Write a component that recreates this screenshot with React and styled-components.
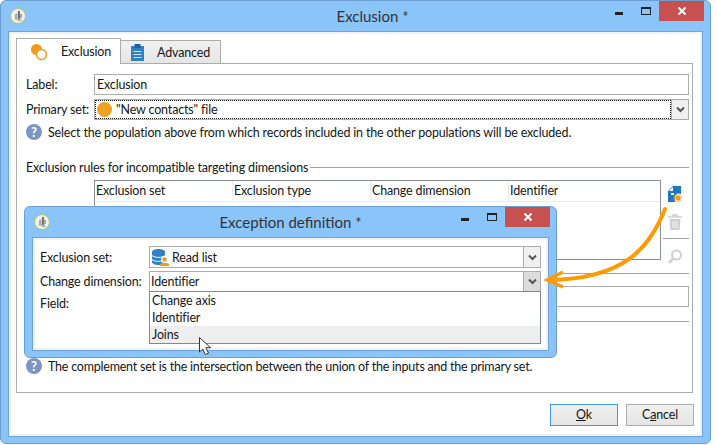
import React from "react";
import styled, { createGlobalStyle } from "styled-components";

const GlobalStyle = createGlobalStyle`
  html, body {
    margin: 0;
    padding: 0;
    background: #fff;
  }
  body {
    font-family: Lato, "Noto Sans", sans-serif;
    font-size: 12.5px;
    letter-spacing: -0.16px;
    color: #161616;
  }
`;

function AppIcon() {
  return (
    <svg width="16" height="16" viewBox="0 0 16 16">
      <circle cx="8" cy="8" r="7.500" fill="#f0f1ec" stroke="#a6c96a" />
      <path d="M5 11.500V6.500l2.500-1.500v6.500z" fill="#a8a8a8" />
      <path d="M9 3v8" stroke="#555" strokeWidth="1.600" />
      <path d="M11 6v4M7.500 12h4" stroke="#777" strokeWidth="1.200" />
    </svg>
  );
}

function ExclusionIcon() {
  return (
    <svg width="18" height="18" viewBox="0 0 18 18">
      <circle cx="6.500" cy="6.500" r="5.500" fill="#f09a1c" />
      <circle cx="11.500" cy="11.500" r="5" fill="#fff" stroke="#f09a1c" strokeWidth="1.400" />
    </svg>
  );
}

function ClipboardIcon() {
  return (
    <svg width="13" height="17" viewBox="0 0 13 17">
      <rect x="0" y="2" width="13" height="15" fill="#2f80c4" />
      <rect x="3.500" y="0" width="6" height="4" fill="#1d5f99" />
      <path d="M2.500 7.500h8M2.500 10.500h8M2.500 13.500h8" stroke="#cfe5f7" strokeWidth="1.200" />
    </svg>
  );
}

function DatabaseIcon() {
  return (
    <svg width="17" height="17" viewBox="0 0 17 17">
      <path d="M0 3c0-4 13-4 13 0v10c0 4-13 4-13 0z" fill="#2f80c4" />
      <path d="M0 6.500c2 2.500 11 2.500 13 0M0 10.500c2 2.500 11 2.500 13 0" stroke="#fff" strokeWidth="1" fill="none" />
      <circle cx="12.500" cy="10.500" r="3.500" fill="#fff" />
      <circle cx="12.500" cy="10.500" r="2.300" fill="#f09a1c" />
      <path d="M8 17v-2c1-1.500 8-1.500 9 0v2z" fill="#f09a1c" />
    </svg>
  );
}

function AddFileIcon() {
  return (
    <svg width="14" height="16" viewBox="0 0 14 16">
      <path d="M5 0h8v8a4.500 4.500 0 0 0-6 6v2H0V5z" fill="#1f78c4" />
      <path d="M5 1v4H1z" fill="#fff" />
      <path d="M3 7h3v2H3z" fill="#fff" />
      <circle cx="10" cy="12" r="2.800" fill="#f59a14" />
      <circle cx="10" cy="12" r="4" fill="none" stroke="#f59a14" strokeWidth="1" strokeDasharray="1.200 1" />
    </svg>
  );
}

function TrashIcon() {
  return (
    <svg width="14" height="16" viewBox="0 0 14 16">
      <path d="M0 3h14M5 3V1h4v2" stroke="#cfcfcf" strokeWidth="1.600" fill="none" />
      <path d="M1.500 5h11l-1 11h-9z" fill="#cfcfcf" />
      <path d="M5 7v7M7 7v7M9 7v7" stroke="#f4f4f4" strokeWidth="1" />
    </svg>
  );
}

function SearchIcon() {
  return (
    <svg width="14" height="16" viewBox="0 0 14 16">
      <circle cx="8.500" cy="6" r="4.500" fill="none" stroke="#cfcfcf" strokeWidth="2" />
      <path d="M5 9.500L1 14" stroke="#cfcfcf" strokeWidth="2.600" />
    </svg>
  );
}

function CloseGlyph() {
  return (
    <svg width="10" height="10" viewBox="0 0 10 10">
      <path d="M1.500 1.500l7 7M8.500 1.500l-7 7" stroke="#fff" strokeWidth="2" />
    </svg>
  );
}

function Chevron() {
  return (
    <svg width="9" height="7" viewBox="0 0 9 7">
      <path d="M1 1.500l3.500 3.500L8 1.500" stroke="#555" strokeWidth="2" fill="none" />
    </svg>
  );
}

function Titlebar({ title, shift }) {
  return (
    <TitleBar $shift={shift}>
      <TitleIcon>
        <AppIcon />
      </TitleIcon>
      <TitleText>{title}</TitleText>
      <Controls>
        <MinButton>
          <MinGlyph />
        </MinButton>
        <MaxButton>
          <MaxGlyph />
        </MaxButton>
        <CloseButton>
          <CloseGlyph />
        </CloseButton>
      </Controls>
    </TitleBar>
  );
}

function Combo({ children, active, focused, $gap }) {
  return (
    <ComboBox>
      <ComboValue $focused={focused} $gap={$gap}>
        {children}
      </ComboValue>
      <ComboArrow $active={active}>
        <Chevron />
      </ComboArrow>
    </ComboBox>
  );
}

function Hint({ children, ...rest }) {
  return (
    <HintRow {...rest}>
      <HelpDot>?</HelpDot>
      <span>{children}</span>
    </HintRow>
  );
}

export default function App() {
  return (
    <Page>
      <GlobalStyle />
      <Window $width={711} $height={444}>
        <Titlebar title="Exclusion *" shift={34} />
        <Client>
          <TabArea>
            <TabBar>
              <Tab $active>
                <ExclusionIcon />
                <TabLabel>Exclusion</TabLabel>
              </Tab>
              <Tab>
                <ClipboardIcon />
                <TabLabel>Advanced</TabLabel>
              </Tab>
            </TabBar>
            <TabPane>
              <FormRow>
                <span>Label:</span>
                <TextInput>Exclusion</TextInput>
              </FormRow>
              <FormRow>
                <span>Primary set:</span>
                <Combo focused>
                  <OrangeDot />
                  "New contacts" file
                </Combo>
              </FormRow>
              <Hint>
                Select the population above from which records included in the other
                populations will be excluded.
              </Hint>
              <GroupHeader>Exclusion rules for incompatible targeting dimensions</GroupHeader>
              <TableRow>
                <Table>
                  <TableHead>
                    <HeadCell>Exclusion set</HeadCell>
                    <HeadCell>Exclusion type</HeadCell>
                    <HeadCell>Change dimension</HeadCell>
                    <HeadCell>Identifier</HeadCell>
                  </TableHead>
                </Table>
                <Toolbar>
                  <ToolButton>
                    <AddFileIcon />
                  </ToolButton>
                  <ToolButton $gap={12}>
                    <TrashIcon />
                  </ToolButton>
                  <ToolDivider />
                  <ToolButton>
                    <SearchIcon />
                  </ToolButton>
                </Toolbar>
              </TableRow>
              <Rule $top={13} />
              <FormRow $top={12}>
                <span />
                <TextInput />
              </FormRow>
              <Rule $top={14} />
              <Hint $top={36} $spacing={-0.22}>
                The complement set is the intersection between the union of the inputs and
                the primary set.
              </Hint>
            </TabPane>
          </TabArea>
          <Footer>
            <PushButton $primary>
              <u>O</u>k
            </PushButton>
            <PushButton>
              C<u>a</u>ncel
            </PushButton>
          </Footer>
        </Client>
      </Window>

      <Dialog>
        <Window $width={533} $height={152}>
          <Titlebar title="Exception definition *" />
          <DialogClient>
            <DialogRow $height={22}>
              <span>Exclusion set:</span>
              <Combo $gap={3}>
                <IconSlot>
                  <DatabaseIcon />
                </IconSlot>
                Read list
              </Combo>
            </DialogRow>
            <DialogRow $height={21} $top={3}>
              <span>Change dimension:</span>
              <DropAnchor>
                <Combo active>Identifier</Combo>
                <DropList>
                  <DropItem>Change axis</DropItem>
                  <DropItem>Identifier</DropItem>
                  <DropItem $hover>Joins</DropItem>
                </DropList>
              </DropAnchor>
            </DialogRow>
            <DialogRow $height={21} $top={1}>
              <span>Field:</span>
            </DialogRow>
            <DialogFooter>
              <PushButton $primary />
              <PushButton />
            </DialogFooter>
          </DialogClient>
        </Window>
      </Dialog>

      <Overlay width="718" height="445" viewBox="0 0 718 445">
        <path
          d="M665 209C650 247 625 279 549 280"
          fill="none"
          stroke="#ff9a00"
          strokeWidth="4"
          strokeLinecap="round"
        />
        <path d="M563 272L547 280L563 287" fill="none" stroke="#ff9a00" strokeWidth="3.200" />
        <path
          d="M199.500 337.500v14.500l3.200-3 2.600 5.500 3.200-1.400-2.600-5.400h4.600z"
          fill="#fff"
          stroke="#333"
          strokeWidth="1"
        />
      </Overlay>
    </Page>
  );
}

const Page = styled.div`
  position: relative;
  width: 718px;
  height: 445px;
  overflow: hidden;
  white-space: nowrap;
`;

const Window = styled.div`
  box-sizing: border-box;
  width: ${(p) => p.$width}px;
  height: ${(p) => p.$height}px;
  display: flex;
  flex-direction: column;
  background: #8ac4f9;
  border: 1px solid #6b9fd0;
  border-radius: 6px;
  padding: 0 7px 6px;
`;

const TitleBar = styled.div`
  flex: none;
  height: 30px;
  margin: 0 -7px;
  padding-left: ${(p) => p.$shift || 0}px;
  display: grid;
  grid-template-columns: 1fr auto 1fr;
  align-items: start;
  box-sizing: border-box;
  position: relative;
`;

const TitleIcon = styled.div`
  position: absolute;
  left: 9px;
  top: 7px;
  width: 16px;
  height: 16px;
`;

const TitleText = styled.div`
  grid-column: 2;
  font-size: 15px;
  letter-spacing: 0;
  line-height: 30px;
  color: #333;
`;

const Controls = styled.div`
  grid-column: 3;
  justify-self: end;
  margin-right: 6px;
  display: flex;
  height: 20px;
`;

const MinButton = styled.div`
  width: 27px;
  display: flex;
  justify-content: center;
  align-items: flex-end;
  padding-bottom: 6px;
  box-sizing: border-box;
`;

const MinGlyph = styled.div`
  width: 8px;
  height: 3px;
  background: #222;
`;

const MaxButton = styled.div`
  width: 27px;
  display: flex;
  justify-content: center;
  align-items: center;
`;

const MaxGlyph = styled.div`
  box-sizing: border-box;
  width: 10px;
  height: 8px;
  border: 1px solid #222;
  border-top-width: 2px;
`;

const CloseButton = styled.div`
  width: 45px;
  background: #c75050;
  display: flex;
  justify-content: center;
  align-items: center;
`;

const Client = styled.div`
  flex: 1;
  min-height: 0;
  display: flex;
  flex-direction: column;
  background: #fff;
  border: 1px solid #6ba3da;
  box-shadow: inset 0 0 0 2px #f2f2f2;
`;

const TabArea = styled.div`
  margin: 7px 9px 0 7px;
`;

const TabBar = styled.div`
  height: 25px;
  display: flex;
  align-items: flex-end;
  position: relative;
  z-index: 1;
  margin-bottom: -1px;
`;

const Tab = styled.div`
  box-sizing: border-box;
  height: ${(p) => (p.$active ? 26 : 24)}px;
  width: ${(p) => (p.$active ? 105 : 101)}px;
  margin-left: ${(p) => (p.$active ? 0 : -1)}px;
  padding-left: ${(p) => (p.$active ? 13 : 10)}px;
  display: flex;
  align-items: center;
  background: ${(p) => (p.$active ? "#fff" : "linear-gradient(#f0f0f0, #e5e5e5)")};
  border: 1px solid #acacac;
  border-bottom: ${(p) => (p.$active ? "none" : "1px solid #acacac")};
`;

const TabLabel = styled.span`
  margin-left: 13px;
`;

const TabPane = styled.div`
  box-sizing: border-box;
  height: 330px;
  border: 1px solid #acacac;
  padding: 10px 3px 0 9px;
`;

const FormRow = styled.div`
  display: grid;
  grid-template-columns: 68px 1fr;
  align-items: center;
  height: 21px;
  margin-top: ${(p) => p.$top ?? 4}px;
  &:first-child {
    margin-top: 0;
  }
`;

const TextInput = styled.div`
  box-sizing: border-box;
  height: 21px;
  line-height: 19px;
  padding-left: 2px;
  border: 1px solid #acacac;
  background: #fff;
`;

const ComboBox = styled.div`
  box-sizing: border-box;
  height: 100%;
  display: flex;
  border: 1px solid #acacac;
  background: #fff;
`;

const ComboValue = styled.div`
  flex: 1;
  min-width: 0;
  display: flex;
  align-items: center;
  gap: ${(p) => p.$gap ?? 4}px;
  padding-left: 1px;
  outline: ${(p) => (p.$focused ? "1px dotted #222" : "none")};
  outline-offset: -1px;
`;

const IconSlot = styled.span`
  display: flex;
  margin-left: 1px;
`;

const ComboArrow = styled.div`
  flex: none;
  width: 16px;
  display: flex;
  justify-content: center;
  align-items: center;
  background: ${(p) => (p.$active ? "#dcdcdc" : "#f0f0f0")};
  border-left: 1px solid #acacac;
`;

const OrangeDot = styled.span`
  width: 15px;
  height: 15px;
  margin-left: 1px;
  border-radius: 50%;
  background: #f0a020;
`;

const HintRow = styled.div`
  display: flex;
  align-items: center;
  gap: 6px;
  height: 16px;
  margin-top: ${(p) => p.$top ?? 4}px;
  letter-spacing: ${(p) => p.$spacing ?? -0.16}px;
`;

const HelpDot = styled.span`
  width: 16px;
  height: 16px;
  border-radius: 50%;
  background: #7b96c6;
  color: #fff;
  font-size: 13px;
  font-weight: 700;
  line-height: 16px;
  text-align: center;
`;

const GroupHeader = styled.div`
  display: flex;
  align-items: center;
  gap: 2px;
  height: 16px;
  margin-top: 19px;
  &::after {
    content: "";
    flex: 1;
    height: 1px;
    background: #a0a0a0;
  }
`;

const TableRow = styled.div`
  display: flex;
  margin: 5px 0 0 68px;
  height: 80px;
`;

const Table = styled.div`
  box-sizing: border-box;
  width: 567px;
  height: 100%;
  border: 1px solid #8a8f96;
  background: #fff;
`;

const TableHead = styled.div`
  display: grid;
  grid-template-columns: repeat(4, 138px);
  height: 20px;
  border-bottom: 1px solid #e3eefa;
`;

const HeadCell = styled.div`
  padding-left: 1px;
  line-height: 20px;
  border-right: 1px solid #e3eefa;
  &:last-child {
    border-right: none;
  }
`;

const Toolbar = styled.div`
  width: 26px;
  margin-left: 2px;
  padding-top: 6px;
`;

const ToolButton = styled.div`
  height: 16px;
  padding-left: 5px;
  margin-top: ${(p) => p.$gap || 0}px;
`;

const ToolDivider = styled.div`
  height: 1px;
  background: #a0a0a0;
  margin: 8px 0 10px;
`;

const Rule = styled.div`
  height: 1px;
  background: #a0a0a0;
  margin-top: ${(p) => p.$top}px;
`;

const Footer = styled.div`
  display: flex;
  justify-content: flex-end;
  gap: 8px;
  padding: 11px 8px 0 0;
`;

const PushButton = styled.div`
  box-sizing: border-box;
  width: 68px;
  height: 22px;
  line-height: 20px;
  text-align: center;
  background: linear-gradient(#f0f0f0, #e5e5e5);
  border: 1px solid ${(p) => (p.$primary ? "#3c9bf0" : "#acacac")};
`;

const Dialog = styled.div`
  position: absolute;
  left: 24px;
  top: 206px;
`;

const DialogClient = styled(Client)`
  padding: 8px 7px 6px 7px;
`;

const DialogRow = styled.div`
  display: grid;
  grid-template-columns: 109px 1fr;
  align-items: center;
  height: ${(p) => p.$height}px;
  margin-top: ${(p) => p.$top || 0}px;
`;

const DropAnchor = styled.div`
  position: relative;
  height: 100%;
`;

const DropList = styled.div`
  position: absolute;
  left: 0;
  right: 0;
  top: 20px;
  z-index: 2;
  box-sizing: border-box;
  height: 53px;
  background: #fff;
  border: 1px solid #828790;
`;

const DropItem = styled.div`
  height: 17px;
  line-height: 17px;
  padding-left: 2px;
  background: ${(p) => (p.$hover ? "#eeeeee" : "transparent")};
`;

const DialogFooter = styled.div`
  margin-top: auto;
  margin-right: 1px;
  display: flex;
  justify-content: flex-end;
  gap: 8px;
`;

const Overlay = styled.svg`
  position: absolute;
  left: 0;
  top: 0;
  z-index: 3;
  pointer-events: none;
`;
